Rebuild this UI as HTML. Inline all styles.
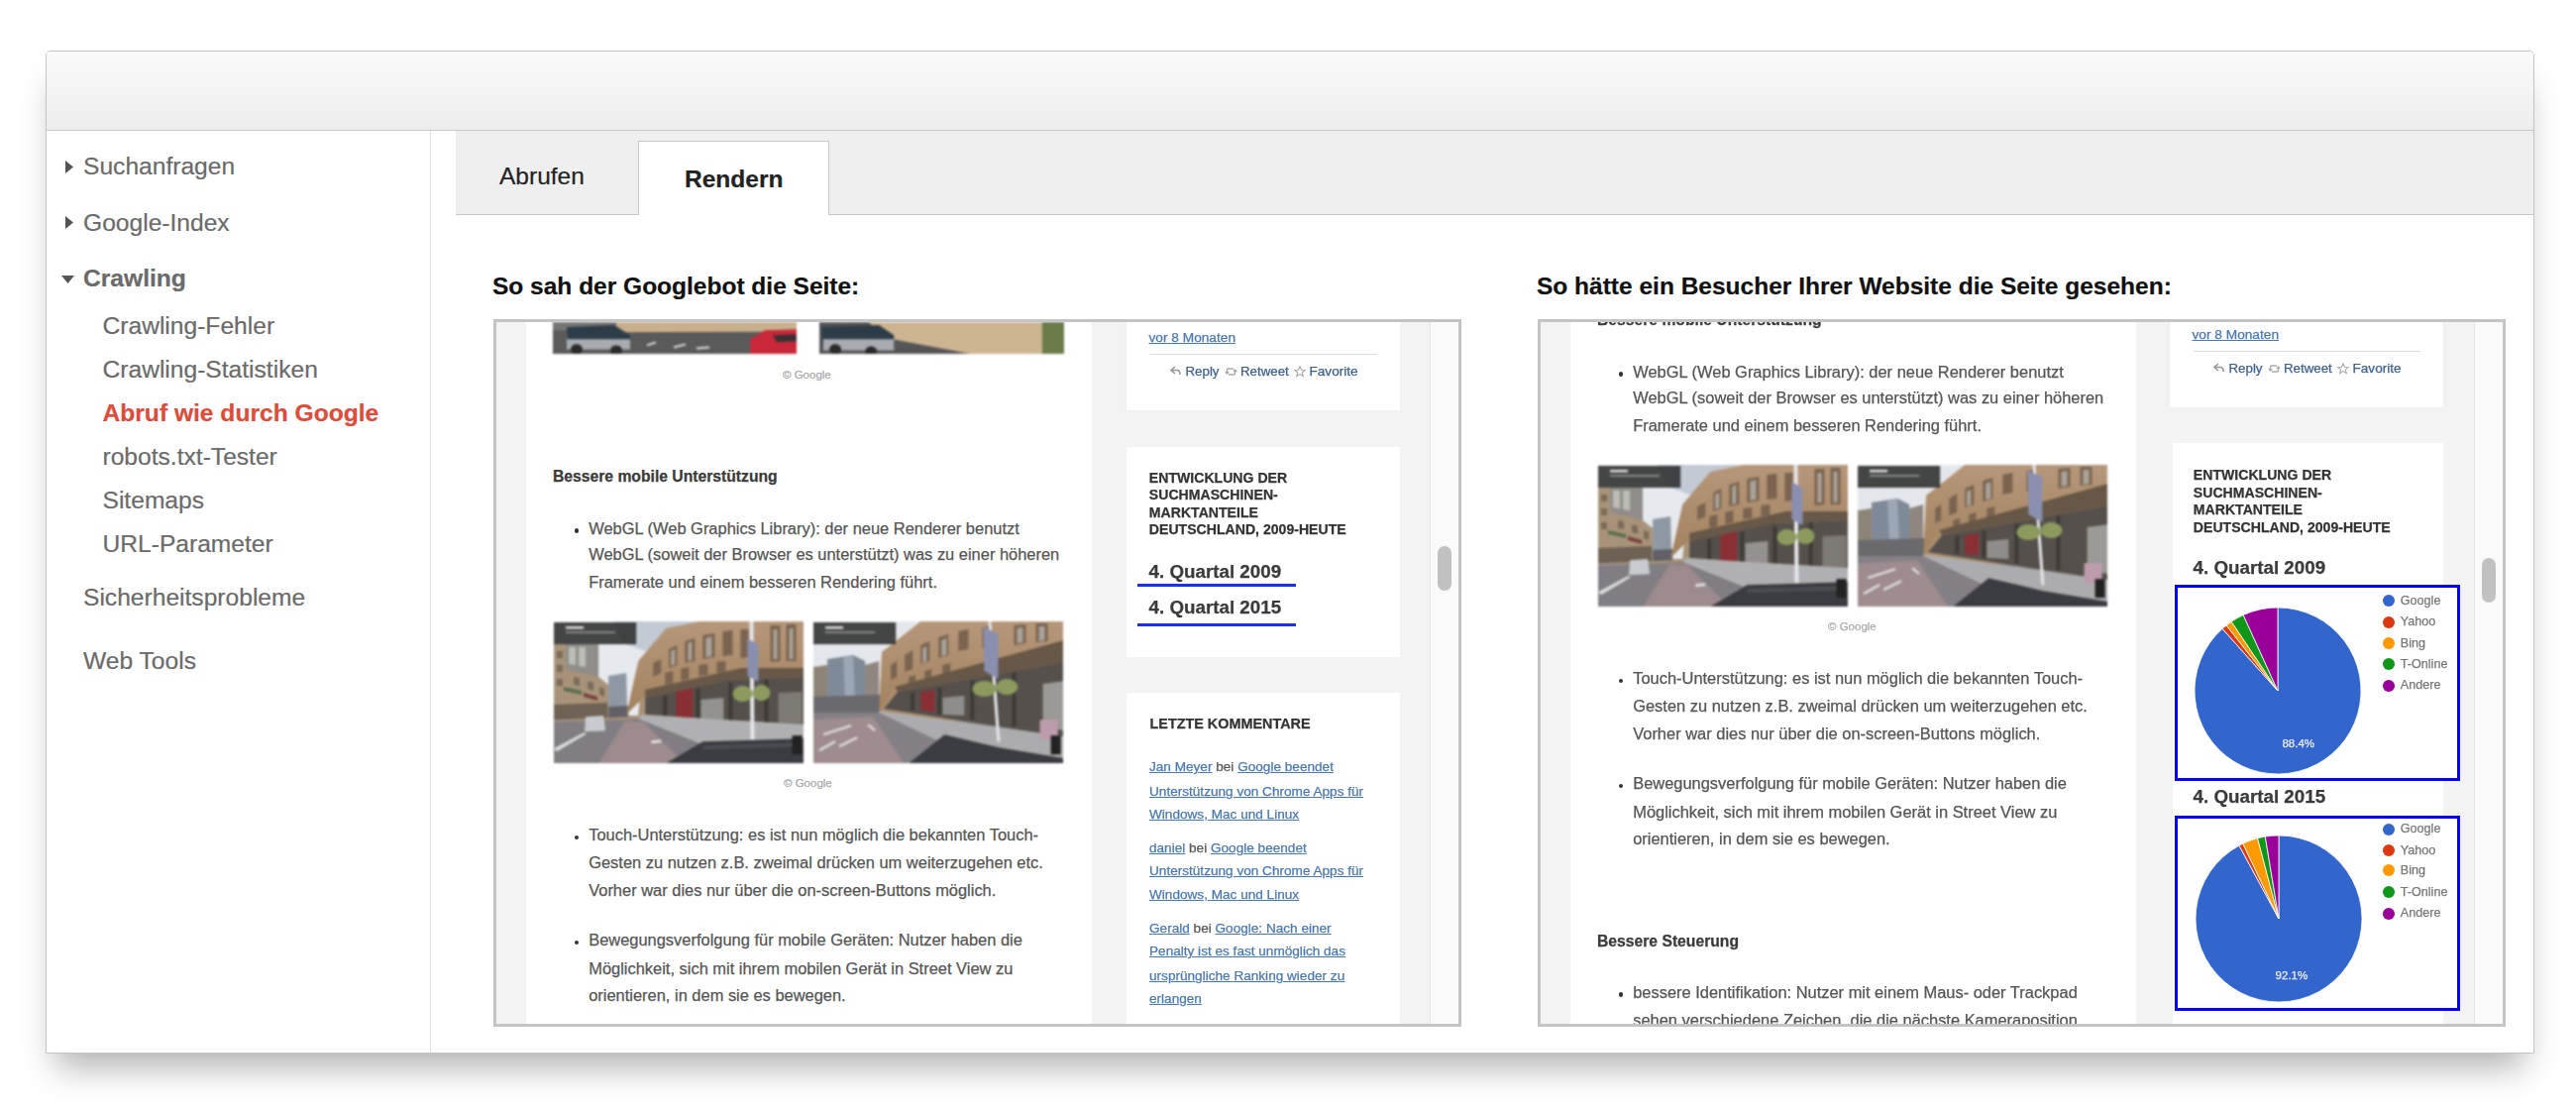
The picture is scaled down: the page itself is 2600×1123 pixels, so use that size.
<!DOCTYPE html><html><head><meta charset="utf-8"><title>Abruf wie durch Google</title><style>
*{margin:0;padding:0;box-sizing:border-box}
html,body{width:2600px;height:1123px;overflow:hidden;background:#fff;font-family:"Liberation Sans", sans-serif}
.a{position:absolute}
.t{position:absolute;white-space:nowrap;line-height:1}
u{text-decoration:underline}
.s{-webkit-text-stroke:0.2px currentColor}
.r{-webkit-text-stroke:0.25px currentColor}
</style></head><body>
<div class="a" style="left:46px;top:51px;width:2512px;height:1012px;border:1px solid #c4c4c4;border-radius:5px 5px 0 0;background:#fff;box-shadow:0 24px 32px -10px rgba(0,0,0,0.3)"></div>
<div class="a" style="left:47px;top:52px;width:2510px;height:79px;border-radius:4px 4px 0 0;background:linear-gradient(#fbfbfb,#ededed)"></div>
<div class="a" style="left:47px;top:131px;width:2510px;height:1px;background:#c6c6c6"></div>
<div class="a" style="left:434px;top:132px;width:1px;height:930px;background:#e2e2e2"></div>
<div class="a" style="left:460px;top:132px;width:2097px;height:84px;background:#efefef"></div>
<div class="a" style="left:460px;top:216px;width:2097px;height:1px;background:#c8c8c8"></div>
<div class="a" style="left:644px;top:142px;width:193px;height:75px;background:#fff;border:1px solid #c8c8c8;border-bottom:none"></div>
<div class="t s" style="left:504.0px;top:166.2px;font-size:24.5px;color:#222;">Abrufen</div>
<div class="t s" style="left:691.0px;top:168.7px;font-size:24.5px;font-weight:bold;color:#222;">Rendern</div>
<svg class="a" style="left:66px;top:161.5px" width="9" height="14"><path d="M0,0 L8,6.5 L0,13 Z" fill="#555"/></svg>
<svg class="a" style="left:66px;top:217.5px" width="9" height="14"><path d="M0,0 L8,6.5 L0,13 Z" fill="#555"/></svg>
<svg class="a" style="left:62px;top:278px" width="14" height="9"><path d="M0,0 L13,0 L6.5,8 Z" fill="#555"/></svg>
<div class="t s" style="left:84.0px;top:156.4px;font-size:24.6px;color:#6a6a6a;">Suchanfragen</div>
<div class="t s" style="left:84.0px;top:212.9px;font-size:24.6px;color:#6a6a6a;">Google-Index</div>
<div class="t s" style="left:84.0px;top:268.8px;font-size:24.6px;font-weight:bold;color:#6a6a6a;">Crawling</div>
<div class="t s" style="left:103.5px;top:316.8px;font-size:24.6px;color:#6a6a6a;">Crawling-Fehler</div>
<div class="t s" style="left:103.5px;top:360.8px;font-size:24.6px;color:#6a6a6a;">Crawling-Statistiken</div>
<div class="t s" style="left:103.5px;top:404.8px;font-size:24.6px;font-weight:bold;color:#dd4b39;">Abruf wie durch Google</div>
<div class="t s" style="left:103.5px;top:449.3px;font-size:24.6px;color:#6a6a6a;">robots.txt-Tester</div>
<div class="t s" style="left:103.5px;top:492.9px;font-size:24.6px;color:#6a6a6a;">Sitemaps</div>
<div class="t s" style="left:103.5px;top:537.3px;font-size:24.6px;color:#6a6a6a;">URL-Parameter</div>
<div class="t s" style="left:84.0px;top:591.0px;font-size:24.6px;color:#6a6a6a;">Sicherheitsprobleme</div>
<div class="t s" style="left:84.0px;top:655.3px;font-size:24.6px;color:#6a6a6a;">Web Tools</div>
<div class="t s" style="left:497.0px;top:276.7px;font-size:24.5px;font-weight:bold;color:#111;">So sah der Googlebot die Seite:</div>
<div class="t s" style="left:1551.0px;top:276.7px;font-size:24.5px;font-weight:bold;color:#111;">So hätte ein Besucher Ihrer Website die Seite gesehen:</div>
<svg width="0" height="0" style="position:absolute"><defs><linearGradient id="facA" x1="0" y1="0" x2="0" y2="1"><stop offset="0" stop-color="#b6977a"/><stop offset="1" stop-color="#a2825f"/></linearGradient>
<filter id="bl" x="-2%" y="-2%" width="104%" height="104%"><feGaussianBlur stdDeviation="0.7"/></filter><symbol id="svA" viewBox="0 0 252 143">
<rect width="252" height="143" fill="#8e8c90"/>
<rect x="0" y="0" width="252" height="100" fill="#a89276"/>
<path d="M0,0 L150,0 L120,25 L90,40 L85,95 L44,95 L44,23 L0,23 Z" fill="#e6eaee"/>
<path d="M60,0 L150,0 L118,22 L92,30 L70,22 Z" fill="#c2cad4"/>
<path d="M55,55 L73,52 L74,95 L55,96 Z" fill="#8e98a4"/>
<path d="M0,23 L12,23 L12,48 L45,56 L55,64 L55,96 L0,98 Z" fill="#a8937a"/>
<path d="M12,23 L45,23 L45,56 L12,48 Z" fill="#8f8e8a"/>
<path d="M15,26 L22,26 L22,44 L15,43 Z M25,26 L32,26 L32,46 L25,45 Z" fill="#bdbdb6"/>
<path d="M3,30 L9,30 L9,37 L3,37 Z M3,44 L9,44 L9,51 L3,51 Z M3,58 L9,58 L9,65 L3,65 Z M20,56 L26,57 L26,65 L20,64 Z M34,60 L40,62 L40,70 L34,68 Z M46,66 L51,68 L51,76 L46,74 Z" fill="#7b6b58"/>
<path d="M10,66 L28,70 L28,74 L10,70 Z" fill="#5a7050"/><path d="M30,72 L44,76 L44,80 L30,76 Z" fill="#7a4040"/>
<path d="M0,84 L54,82 L54,97 L0,99 Z" fill="#6e6254"/>
<path d="M55,86 L75,85 L75,96 L55,97 Z" fill="#626066"/>
<path d="M73,94 L85,40 L113,7 L147,0 L252,0 L252,50 L92,75 Z" fill="url(#facA)"/>
<path d="M100,42 L108,38 L108,52 L100,56 Z M116,28 L124,24 L124,44 L116,47 Z M132,20 L142,17 L142,40 L132,42 Z M150,14 L162,12 L162,36 L150,38 Z M170,10 L180,9 L180,34 L170,35 Z M112,52 L120,50 L120,62 L112,64 Z M128,48 L136,46 L136,58 L128,60 Z M146,44 L155,43 L155,54 L146,55 Z M164,41 L173,40 L173,51 L164,52 Z M218,4 L228,4 L228,40 L218,41 Z M234,3 L244,3 L244,40 L234,40 Z M188,8 L196,8 L196,36 L188,37 Z" fill="#7a6450"/>
<path d="M118,30 L122,28 L122,43 L118,45 Z M135,22 L139,20 L139,39 L135,40 Z M153,17 L159,15 L159,35 L153,36 Z M221,8 L225,8 L225,38 L221,38 Z M237,7 L241,7 L241,38 L237,38 Z" fill="#a9a39a"/>
<path d="M92,69 L189,47 L252,47 L252,56 L175,59 L92,77 Z" fill="#675848"/>
<path d="M92,77 L175,59 L252,56 L252,104 L92,94 Z" fill="#55504b"/>
<path d="M110,75 L114,74 L114,96 L110,95 Z M143,68 L147,67 L147,99 L143,99 Z M176,62 L180,62 L180,101 L176,101 Z M212,58 L216,58 L216,103 L212,103 Z" fill="#3e3a36"/>
<path d="M123,71 L140,67 L140,99 L123,97 Z" fill="#8a3035"/>
<path d="M148,79 L171,77 L171,100 L148,99 Z" fill="#94928f"/>
<path d="M226,72 L250,71 L250,104 L226,103 Z" fill="#7d7a76"/>
<path d="M88,94 L252,104 L252,120 L147,123 L85,98 Z" fill="#b0b0b2"/>
<path d="M0,102 L85,98 L147,123 L113,143 L0,143 Z" fill="#807e83"/>
<path d="M45,143 L72,100 L90,101 L132,143 Z" fill="#9c8a8c"/>
<path d="M0,128 L30,112 L33,113 L3,131 Z M98,120 L108,119 L108,122 L98,123 Z" fill="#ddd"/>
<path d="M113,143 L150,121 L252,118 L252,143 Z" fill="#3a3c41"/>
<path d="M150,125 L252,122 L252,126 L150,129 Z" fill="#4a4d52"/>
<path d="M32,96 L50,95 L52,110 L31,111 Z" fill="#c8ccd0"/>
<path d="M197,0 L201,0 L202,119 L198,119 Z" fill="#e6e6ea"/>
<path d="M195,17 L206,24 L206,61 L195,55 Z" fill="#8a8fb0"/>
<ellipse cx="190" cy="73" rx="10" ry="8" fill="#8c9a5e"/>
<ellipse cx="209" cy="72" rx="9" ry="8" fill="#8c9a5e"/>
<rect x="240" y="115" width="10" height="19" fill="#222"/>
<rect x="0" y="1" width="83" height="22" fill="#2e2e2e" opacity="0.88"/>
<rect x="12" y="5" width="18" height="2.5" fill="#ddd"/><rect x="12" y="10" width="50" height="2" fill="#888"/>
</symbol><symbol id="svB" viewBox="0 0 252 143">
<rect width="252" height="143" fill="#8e8c90"/>
<rect x="0" y="0" width="252" height="100" fill="#ab8d6c"/>
<path d="M0,0 L110,0 L69,31 L66,91 L0,91 Z" fill="#e4e8ec"/>
<path d="M14,38 L40,34 L52,40 L54,80 L14,81 Z" fill="#7f8a98"/>
<path d="M30,36 L40,34 L42,80 L32,80 Z" fill="#9ca7b4"/>
<path d="M52,44 L66,40 L66,82 L52,82 Z" fill="#8f8680"/>
<path d="M0,46 L14,44 L14,82 L0,82 Z" fill="#8d8478"/>
<path d="M0,76 L68,74 L68,92 L0,92 Z" fill="#6a696c"/>
<path d="M66,92 L69,31 L108,0 L252,0 L252,19 L82,66 Z" fill="url(#facA)"/>
<path d="M78,44 L84,40 L84,56 L78,59 Z M92,34 L100,29 L100,48 L92,51 Z M108,24 L117,20 L117,40 L108,43 Z M126,16 L136,13 L136,34 L126,37 Z M146,10 L156,8 L156,28 L146,30 Z M96,56 L103,54 L103,64 L96,66 Z M112,50 L119,48 L119,58 L112,60 Z M130,44 L138,42 L138,52 L130,54 Z M202,4 L214,3 L214,22 L202,24 Z M224,2 L236,2 L236,20 L224,21 Z M170,6 L178,5 L178,26 L170,27 Z" fill="#7a6450"/>
<path d="M110,27 L114,25 L114,40 L110,42 Z M129,19 L134,17 L134,34 L129,35 Z M205,7 L211,6 L211,21 L205,22 Z M227,5 L233,5 L233,19 L227,20 Z" fill="#a9a39a"/>
<path d="M82,66 L252,19 L252,41 L85,71 Z" fill="#665746"/>
<path d="M85,71 L252,41 L252,116 L71,88 Z" fill="#55504b"/>
<path d="M98,72 L102,71 L102,90 L98,90 Z M125,67 L129,66 L129,94 L125,94 Z M158,60 L162,59 L162,99 L158,99 Z M200,52 L204,51 L204,106 L200,106 Z" fill="#3e3a36"/>
<path d="M108,71 L122,69 L122,91 L108,90 Z" fill="#8a3035"/>
<path d="M130,77 L152,75 L152,95 L130,94 Z" fill="#8f8d8b"/>
<path d="M231,63 L252,60 L252,110 L231,106 Z" fill="#9c9a96"/>
<path d="M66,90 L252,116 L252,138 L125,120 L66,93 Z" fill="#acacae"/>
<path d="M0,92 L66,92 L125,120 L96,143 L0,143 Z" fill="#848085"/>
<path d="M0,143 L0,99 L60,96 L91,143 Z" fill="#9e8c8e"/>
<path d="M6,130 L22,121 M26,126 L44,117 M10,114 L38,105 M55,104 L62,110" stroke="#dcdcdc" stroke-width="2.5" fill="none"/>
<path d="M96,143 L132,114 L187,127 L252,138 L252,143 Z" fill="#3a3c41"/>
<path d="M176,0 L179,0 L188,121 L185,121 Z" fill="#e6e6ea"/>
<path d="M171,5 L186,13 L186,58 L172,50 Z" fill="#8a8fb0"/>
<ellipse cx="172" cy="68" rx="12" ry="8" fill="#8c9a5e"/>
<ellipse cx="195" cy="66" rx="11" ry="8" fill="#8c9a5e"/>
<path d="M228,99 L246,99 L246,119 L228,119 Z" fill="#bc9cac"/>
<rect x="239" y="115" width="10" height="19" fill="#222"/>
<rect x="0" y="1" width="83" height="22" fill="#2e2e2e" opacity="0.88"/>
<rect x="12" y="5" width="18" height="2.5" fill="#ddd"/><rect x="12" y="10" width="50" height="2" fill="#888"/>
</symbol><symbol id="svTopA" viewBox="0 -3 246 34"><g>
<rect y="-3" width="246" height="34" fill="#5a5a5b"/>
<path d="M64,-3 L246,-3 L246,6.5 L64,7 Z" fill="#c9b08c"/>
<path d="M0,-3 L64,-3 L64,5 L0,5 Z" fill="#777"/>
<path d="M14,2 L62,0 L78,10 L78,22 L16,22 Z" fill="#2c3c48"/>
<path d="M14,14 L78,14 L78,24 L14,24 Z" fill="#a8acb0"/>
<ellipse cx="24" cy="24" rx="6" ry="5" fill="#2a2a2a"/><ellipse cx="64" cy="25" rx="6" ry="5" fill="#2a2a2a"/>
<path d="M95,20 L104,17 M122,22 L134,19 M145,23 L158,22" stroke="#e0e0e0" stroke-width="2"/>
<path d="M199,14 L214,5 L246,4 L246,31 L199,31 Z" fill="#c8283a"/>
<path d="M222,10 L246,9 L246,16 L226,17 Z" fill="#3a3032"/>
</g></symbol><symbol id="svTopB" viewBox="0 -3 246 34"><g>
<rect y="-3" width="246" height="34" fill="#555557"/>
<path d="M50,-3 L246,-3 L246,31 L165,31 L63,12 Z" fill="#cdb592"/>
<path d="M2,2 L60,0 L75,10 L75,22 L4,22 Z" fill="#2c3c48"/>
<path d="M4,14 L75,14 L75,25 L4,25 Z" fill="#a8acb0"/>
<ellipse cx="16" cy="24" rx="6" ry="5" fill="#2a2a2a"/><ellipse cx="52" cy="26" rx="6" ry="5" fill="#2a2a2a"/>
<rect x="224" y="-3" width="22" height="34" fill="#6b7c4a"/>
</g></symbol></defs></svg>
<div class="a" style="left:498px;top:322px;width:977px;height:714px;border:3px solid #c4c4c4;background:#f3f3f3;overflow:hidden">
<div class="a" style="left:0;top:0;width:971px;height:708px;overflow:hidden;filter:blur(0.35px)">
<div class="a" style="left:30px;top:0;width:571px;height:708px;background:#fff"></div>
<svg class="a" style="left:57.2px;top:-3.0px;filter:blur(0.9px)" width="246" height="34.5" viewBox="0 -3 246 34" preserveAspectRatio="none"><use href="#svTopA"/></svg>
<svg class="a" style="left:325.7px;top:-3.0px;filter:blur(0.9px)" width="247" height="34.5" viewBox="0 -3 246 34" preserveAspectRatio="none"><use href="#svTopB"/></svg>
<div class="t r" style="left:289.0px;top:47.8px;font-size:11.5px;color:#aaa;">© Google</div>
<div class="t r" style="left:57.0px;top:148.1px;font-size:15.7px;font-weight:bold;color:#3a3a3a;">Bessere mobile Unterstützung</div>
<div class="a" style="left:78.5px;top:208.0px;width:4.5px;height:4.5px;border-radius:50%;background:#333"></div>
<div class="t r" style="left:93.2px;top:199.7px;font-size:16.45px;color:#555;">WebGL (Web Graphics Library): der neue Renderer benutzt</div>
<div class="t r" style="left:93.2px;top:226.4px;font-size:16.45px;color:#555;">WebGL (soweit der Browser es unterstützt) was zu einer höheren</div>
<div class="t r" style="left:93.2px;top:253.8px;font-size:16.45px;color:#555;">Framerate und einem besseren Rendering führt.</div>
<svg class="a" style="left:57.6px;top:302.2px;filter:blur(0.9px)" width="252.6" height="143.2" viewBox="0 0 252 143" preserveAspectRatio="none"><use href="#svA"/></svg>
<svg class="a" style="left:319.7px;top:302.2px;filter:blur(0.9px)" width="252.6" height="143.2" viewBox="0 0 252 143" preserveAspectRatio="none"><use href="#svB"/></svg>
<div class="t r" style="left:290.0px;top:460.3px;font-size:11.5px;color:#aaa;">© Google</div>
<div class="a" style="left:78.5px;top:517.7px;width:4.5px;height:4.5px;border-radius:50%;background:#333"></div>
<div class="t r" style="left:93.2px;top:509.4px;font-size:16.45px;color:#555;">Touch-Unterstützung: es ist nun möglich die bekannten Touch-</div>
<div class="t r" style="left:93.2px;top:536.7px;font-size:16.45px;color:#555;">Gesten zu nutzen z.B. zweimal drücken um weiterzugehen etc.</div>
<div class="t r" style="left:93.2px;top:564.9px;font-size:16.45px;color:#555;">Vorher war dies nur über die on-screen-Buttons möglich.</div>
<div class="a" style="left:78.5px;top:623.7px;width:4.5px;height:4.5px;border-radius:50%;background:#333"></div>
<div class="t r" style="left:93.2px;top:615.4px;font-size:16.45px;color:#555;">Bewegungsverfolgung für mobile Geräten: Nutzer haben die</div>
<div class="t r" style="left:93.2px;top:643.6px;font-size:16.45px;color:#555;">Möglichkeit, sich mit ihrem mobilen Gerät in Street View zu</div>
<div class="t r" style="left:93.2px;top:670.9px;font-size:16.45px;color:#555;">orientieren, in dem sie es bewegen.</div>
<div class="t r" style="left:57.0px;top:774.7px;font-size:15.7px;font-weight:bold;color:#3a3a3a;">Bessere Steuerung</div>
<div class="a" style="left:78.5px;top:834.4px;width:4.5px;height:4.5px;border-radius:50%;background:#333"></div>
<div class="t r" style="left:93.2px;top:826.1px;font-size:16.45px;color:#555;">bessere Identifikation: Nutzer mit einem Maus- oder Trackpad</div>
<div class="t r" style="left:93.2px;top:853.6px;font-size:16.45px;color:#555;">sehen verschiedene Zeichen, die die nächste Kameraposition</div>
<div class="a" style="left:636px;top:-20px;width:276px;height:109.4px;background:#fff;box-shadow:0 0 4px rgba(0,0,0,0.03)"></div>
<div class="t r" style="left:658.5px;top:9.2px;font-size:13.7px;color:#4a78b5;"><u>vor 8 Monaten</u></div>
<div class="a" style="left:660px;top:32.0px;width:229px;height:1.3px;background:#dcdcdc"></div>
<svg class="a" style="left:680px;top:44.0px" width="12" height="11" viewBox="0 0 12 11"><path d="M5,1 L1,4.5 L5,8 M1.5,4.5 L7,4.5 Q10,4.5 10,9" fill="none" stroke="#999" stroke-width="1.6"/></svg>
<div class="t r" style="left:695.5px;top:42.7px;font-size:13.3px;color:#3d6090;">Reply</div>
<svg class="a" style="left:735px;top:45.0px" width="13" height="10" viewBox="0 0 13 10"><path d="M2.5,6 L2.5,3 Q2.5,2 3.5,2 L9,2 M10.5,4 L10.5,7 Q10.5,8 9.5,8 L4,8 M0.8,5 L2.5,7 L4.2,5 M8.8,5 L10.5,3 L12.2,5" fill="none" stroke="#aaa" stroke-width="1.3"/></svg>
<div class="t r" style="left:751.0px;top:42.7px;font-size:13.3px;color:#3d6090;">Retweet</div>
<svg class="a" style="left:805px;top:43.5px" width="12" height="12" viewBox="0 0 12 12"><path d="M6,0.8 L7.5,4.3 L11.2,4.5 L8.3,6.9 L9.3,10.6 L6,8.6 L2.7,10.6 L3.7,6.9 L0.8,4.5 L4.5,4.3 Z" fill="none" stroke="#aaa" stroke-width="1.1"/></svg>
<div class="t r" style="left:820.5px;top:42.5px;font-size:13.6px;color:#3d6090;">Favorite</div>
<div class="a" style="left:636px;top:126px;width:276px;height:211.5px;background:#fff"></div>
<div class="t r" style="left:658.8px;top:149.7px;font-size:14.1px;font-weight:bold;color:#333;">ENTWICKLUNG DER</div>
<div class="t r" style="left:658.8px;top:167.1px;font-size:14.1px;font-weight:bold;color:#333;">SUCHMASCHINEN-</div>
<div class="t r" style="left:658.8px;top:184.6px;font-size:14.1px;font-weight:bold;color:#333;">MARKTANTEILE</div>
<div class="t r" style="left:658.8px;top:202.0px;font-size:14.1px;font-weight:bold;color:#333;">DEUTSCHLAND, 2009-HEUTE</div>
<div class="t r" style="left:658.5px;top:242.5px;font-size:18.8px;font-weight:bold;color:#3a3a3a;">4. Quartal 2009</div>
<div class="a" style="left:646.7px;top:264px;width:160.6px;height:3px;background:#1a2ff5"></div>
<div class="t r" style="left:658.5px;top:279.1px;font-size:18.8px;font-weight:bold;color:#3a3a3a;">4. Quartal 2015</div>
<div class="a" style="left:646.7px;top:304px;width:160.6px;height:3px;background:#1a2ff5"></div>
<div class="a" style="left:636px;top:374.4px;width:276px;height:400px;background:#fff"></div>
<div class="t r" style="left:659.5px;top:397.8px;font-size:14.4px;font-weight:bold;color:#333;">LETZTE KOMMENTARE</div>
<div class="t r" style="left:659.0px;top:442.2px;font-size:13.6px;color:#4a78b5;"><u>Jan Meyer</u> <span style="color:#555">bei</span> <u>Google beendet</u></div>
<div class="t r" style="left:659.0px;top:466.5px;font-size:13.6px;color:#4a78b5;"><u>Unterstützung von Chrome Apps für</u></div>
<div class="t r" style="left:659.0px;top:489.9px;font-size:13.6px;color:#4a78b5;"><u>Windows, Mac und Linux</u></div>
<div class="t r" style="left:659.0px;top:523.7px;font-size:13.6px;color:#4a78b5;"><u>daniel</u> <span style="color:#555">bei</span> <u>Google beendet</u></div>
<div class="t r" style="left:659.0px;top:547.3px;font-size:13.6px;color:#4a78b5;"><u>Unterstützung von Chrome Apps für</u></div>
<div class="t r" style="left:659.0px;top:570.9px;font-size:13.6px;color:#4a78b5;"><u>Windows, Mac und Linux</u></div>
<div class="t r" style="left:659.0px;top:604.8px;font-size:13.6px;color:#4a78b5;"><u>Gerald</u> <span style="color:#555">bei</span> <u>Google: Nach einer</u></div>
<div class="t r" style="left:659.0px;top:628.4px;font-size:13.6px;color:#4a78b5;"><u>Penalty ist es fast unmöglich das</u></div>
<div class="t r" style="left:659.0px;top:652.9px;font-size:13.6px;color:#4a78b5;"><u>ursprüngliche Ranking wieder zu</u></div>
<div class="t r" style="left:659.0px;top:675.5px;font-size:13.6px;color:#4a78b5;"><u>erlangen</u></div>
<div class="a" style="left:942px;top:0;width:29px;height:708px;background:#fafafa;border-left:1px solid #e6e6e6"></div>
<div class="a" style="left:949.5px;top:225.6px;width:14.5px;height:45px;border-radius:7.25px;background:#c1c1c1"></div>
</div></div>
<div class="a" style="left:1552px;top:322px;width:977px;height:714px;border:3px solid #c4c4c4;background:#f3f3f3;overflow:hidden">
<div class="a" style="left:0;top:0;width:971px;height:708px;overflow:hidden;filter:blur(0.35px)">
<div class="a" style="left:30px;top:0;width:571px;height:708px;background:#fff"></div>
<svg class="a" style="left:57.2px;top:-161.0px;filter:blur(0.9px)" width="246" height="34.5" viewBox="0 -3 246 34" preserveAspectRatio="none"><use href="#svTopA"/></svg>
<svg class="a" style="left:325.7px;top:-161.0px;filter:blur(0.9px)" width="247" height="34.5" viewBox="0 -3 246 34" preserveAspectRatio="none"><use href="#svTopB"/></svg>
<div class="t r" style="left:289.0px;top:-110.2px;font-size:11.5px;color:#aaa;">© Google</div>
<div class="t r" style="left:57.0px;top:-9.9px;font-size:15.7px;font-weight:bold;color:#3a3a3a;">Bessere mobile Unterstützung</div>
<div class="a" style="left:78.5px;top:50.0px;width:4.5px;height:4.5px;border-radius:50%;background:#333"></div>
<div class="t r" style="left:93.2px;top:41.7px;font-size:16.45px;color:#555;">WebGL (Web Graphics Library): der neue Renderer benutzt</div>
<div class="t r" style="left:93.2px;top:68.4px;font-size:16.45px;color:#555;">WebGL (soweit der Browser es unterstützt) was zu einer höheren</div>
<div class="t r" style="left:93.2px;top:95.8px;font-size:16.45px;color:#555;">Framerate und einem besseren Rendering führt.</div>
<svg class="a" style="left:57.6px;top:144.2px;filter:blur(0.9px)" width="252.6" height="143.2" viewBox="0 0 252 143" preserveAspectRatio="none"><use href="#svA"/></svg>
<svg class="a" style="left:319.7px;top:144.2px;filter:blur(0.9px)" width="252.6" height="143.2" viewBox="0 0 252 143" preserveAspectRatio="none"><use href="#svB"/></svg>
<div class="t r" style="left:290.0px;top:302.3px;font-size:11.5px;color:#aaa;">© Google</div>
<div class="a" style="left:78.5px;top:359.7px;width:4.5px;height:4.5px;border-radius:50%;background:#333"></div>
<div class="t r" style="left:93.2px;top:351.4px;font-size:16.45px;color:#555;">Touch-Unterstützung: es ist nun möglich die bekannten Touch-</div>
<div class="t r" style="left:93.2px;top:378.7px;font-size:16.45px;color:#555;">Gesten zu nutzen z.B. zweimal drücken um weiterzugehen etc.</div>
<div class="t r" style="left:93.2px;top:406.9px;font-size:16.45px;color:#555;">Vorher war dies nur über die on-screen-Buttons möglich.</div>
<div class="a" style="left:78.5px;top:465.7px;width:4.5px;height:4.5px;border-radius:50%;background:#333"></div>
<div class="t r" style="left:93.2px;top:457.4px;font-size:16.45px;color:#555;">Bewegungsverfolgung für mobile Geräten: Nutzer haben die</div>
<div class="t r" style="left:93.2px;top:485.6px;font-size:16.45px;color:#555;">Möglichkeit, sich mit ihrem mobilen Gerät in Street View zu</div>
<div class="t r" style="left:93.2px;top:512.9px;font-size:16.45px;color:#555;">orientieren, in dem sie es bewegen.</div>
<div class="t r" style="left:57.0px;top:616.7px;font-size:15.7px;font-weight:bold;color:#3a3a3a;">Bessere Steuerung</div>
<div class="a" style="left:78.5px;top:676.4px;width:4.5px;height:4.5px;border-radius:50%;background:#333"></div>
<div class="t r" style="left:93.2px;top:668.1px;font-size:16.45px;color:#555;">bessere Identifikation: Nutzer mit einem Maus- oder Trackpad</div>
<div class="t r" style="left:93.2px;top:695.6px;font-size:16.45px;color:#555;">sehen verschiedene Zeichen, die die nächste Kameraposition</div>
<div class="a" style="left:635px;top:-20px;width:276px;height:106.4px;background:#fff;box-shadow:0 0 4px rgba(0,0,0,0.03)"></div>
<div class="t r" style="left:657.5px;top:6.2px;font-size:13.7px;color:#4a78b5;"><u>vor 8 Monaten</u></div>
<div class="a" style="left:659px;top:29.0px;width:229px;height:1.3px;background:#dcdcdc"></div>
<svg class="a" style="left:679px;top:41.0px" width="12" height="11" viewBox="0 0 12 11"><path d="M5,1 L1,4.5 L5,8 M1.5,4.5 L7,4.5 Q10,4.5 10,9" fill="none" stroke="#999" stroke-width="1.6"/></svg>
<div class="t r" style="left:694.5px;top:39.7px;font-size:13.3px;color:#3d6090;">Reply</div>
<svg class="a" style="left:734px;top:42.0px" width="13" height="10" viewBox="0 0 13 10"><path d="M2.5,6 L2.5,3 Q2.5,2 3.5,2 L9,2 M10.5,4 L10.5,7 Q10.5,8 9.5,8 L4,8 M0.8,5 L2.5,7 L4.2,5 M8.8,5 L10.5,3 L12.2,5" fill="none" stroke="#aaa" stroke-width="1.3"/></svg>
<div class="t r" style="left:750.0px;top:39.7px;font-size:13.3px;color:#3d6090;">Retweet</div>
<svg class="a" style="left:804px;top:40.5px" width="12" height="12" viewBox="0 0 12 12"><path d="M6,0.8 L7.5,4.3 L11.2,4.5 L8.3,6.9 L9.3,10.6 L6,8.6 L2.7,10.6 L3.7,6.9 L0.8,4.5 L4.5,4.3 Z" fill="none" stroke="#aaa" stroke-width="1.1"/></svg>
<div class="t r" style="left:819.5px;top:39.5px;font-size:13.6px;color:#3d6090;">Favorite</div>
<div class="a" style="left:637.6px;top:122px;width:273.7px;height:600px;background:#fff"></div>
<div class="t r" style="left:658.8px;top:147.1px;font-size:14.1px;font-weight:bold;color:#333;">ENTWICKLUNG DER</div>
<div class="t r" style="left:658.8px;top:164.6px;font-size:14.1px;font-weight:bold;color:#333;">SUCHMASCHINEN-</div>
<div class="t r" style="left:658.8px;top:182.1px;font-size:14.1px;font-weight:bold;color:#333;">MARKTANTEILE</div>
<div class="t r" style="left:658.8px;top:199.6px;font-size:14.1px;font-weight:bold;color:#333;">DEUTSCHLAND, 2009-HEUTE</div>
<div class="t r" style="left:658.5px;top:239.0px;font-size:18.8px;font-weight:bold;color:#3a3a3a;">4. Quartal 2009</div>
<div class="a" style="left:639.8px;top:264.8px;width:287.8px;height:198.0px;border:3px solid #0000ff;background:#fff;overflow:hidden"><svg class="a" style="left:16.7px;top:19.2px" width="170" height="170"><path d="M85,85 L85.00,1.00 A84,84 0 1 1 29.06,22.34 Z" fill="#3366cc" stroke="#fff" stroke-width="0.8"/><path d="M85,85 L29.06,22.34 A84,84 0 0 1 33.10,18.95 Z" fill="#dc3912" stroke="#fff" stroke-width="0.8"/><path d="M85,85 L33.10,18.95 A84,84 0 0 1 38.22,15.23 Z" fill="#ff9900" stroke="#fff" stroke-width="0.8"/><path d="M85,85 L38.22,15.23 A84,84 0 0 1 50.19,8.55 Z" fill="#109618" stroke="#fff" stroke-width="0.8"/><path d="M85,85 L50.19,8.55 A84,84 0 0 1 85.00,1.00 Z" fill="#990099" stroke="#fff" stroke-width="0.8"/></svg><div class="t r" style="left:105.6px;top:151.9px;font-size:11.5px;color:#eef;">88.4%</div>
<div class="a" style="left:207.4px;top:7.5px;width:12px;height:12px;border-radius:50%;background:#3366cc"></div><div class="t r" style="left:225.0px;top:7.3px;font-size:12.6px;color:#777;">Google</div>
<div class="a" style="left:207.4px;top:28.9px;width:12px;height:12px;border-radius:50%;background:#dc3912"></div><div class="t r" style="left:225.0px;top:28.7px;font-size:12.6px;color:#777;">Yahoo</div>
<div class="a" style="left:207.4px;top:50.2px;width:12px;height:12px;border-radius:50%;background:#ff9900"></div><div class="t r" style="left:225.0px;top:50.0px;font-size:12.6px;color:#777;">Bing</div>
<div class="a" style="left:207.4px;top:71.2px;width:12px;height:12px;border-radius:50%;background:#109618"></div><div class="t r" style="left:225.0px;top:71.0px;font-size:12.6px;color:#777;">T-Online</div>
<div class="a" style="left:207.4px;top:92.8px;width:12px;height:12px;border-radius:50%;background:#990099"></div><div class="t r" style="left:225.0px;top:92.6px;font-size:12.6px;color:#777;">Andere</div>
</div>
<div class="t r" style="left:658.5px;top:469.5px;font-size:18.8px;font-weight:bold;color:#3a3a3a;">4. Quartal 2015</div>
<div class="a" style="left:639.8px;top:498.1px;width:287.8px;height:197.0px;border:3px solid #0000ff;background:#fff;overflow:hidden"><svg class="a" style="left:17.0px;top:15.6px" width="170" height="170"><path d="M85,85 L85.00,1.00 A84,84 0 1 1 45.00,11.14 Z" fill="#3366cc" stroke="#fff" stroke-width="0.8"/><path d="M85,85 L45.00,11.14 A84,84 0 0 1 48.76,9.22 Z" fill="#dc3912" stroke="#fff" stroke-width="0.8"/><path d="M85,85 L48.76,9.22 A84,84 0 0 1 63.60,3.77 Z" fill="#ff9900" stroke="#fff" stroke-width="0.8"/><path d="M85,85 L63.60,3.77 A84,84 0 0 1 71.34,2.12 Z" fill="#109618" stroke="#fff" stroke-width="0.8"/><path d="M85,85 L71.34,2.12 A84,84 0 0 1 85.00,1.00 Z" fill="#990099" stroke="#fff" stroke-width="0.8"/></svg><div class="t r" style="left:98.8px;top:152.5px;font-size:11.5px;color:#eef;">92.1%</div>
<div class="a" style="left:207.4px;top:4.6px;width:12px;height:12px;border-radius:50%;background:#3366cc"></div><div class="t r" style="left:225.0px;top:4.4px;font-size:12.6px;color:#777;">Google</div>
<div class="a" style="left:207.4px;top:25.7px;width:12px;height:12px;border-radius:50%;background:#dc3912"></div><div class="t r" style="left:225.0px;top:25.5px;font-size:12.6px;color:#777;">Yahoo</div>
<div class="a" style="left:207.4px;top:46.4px;width:12px;height:12px;border-radius:50%;background:#ff9900"></div><div class="t r" style="left:225.0px;top:46.2px;font-size:12.6px;color:#777;">Bing</div>
<div class="a" style="left:207.4px;top:67.9px;width:12px;height:12px;border-radius:50%;background:#109618"></div><div class="t r" style="left:225.0px;top:67.7px;font-size:12.6px;color:#777;">T-Online</div>
<div class="a" style="left:207.4px;top:89.5px;width:12px;height:12px;border-radius:50%;background:#990099"></div><div class="t r" style="left:225.0px;top:89.3px;font-size:12.6px;color:#777;">Andere</div>
</div>
<div class="a" style="left:942px;top:0;width:29px;height:708px;background:#fafafa;border-left:1px solid #e6e6e6"></div>
<div class="a" style="left:949.5px;top:238.4px;width:14.5px;height:45px;border-radius:7.25px;background:#c1c1c1"></div>
</div></div>
</body></html>
